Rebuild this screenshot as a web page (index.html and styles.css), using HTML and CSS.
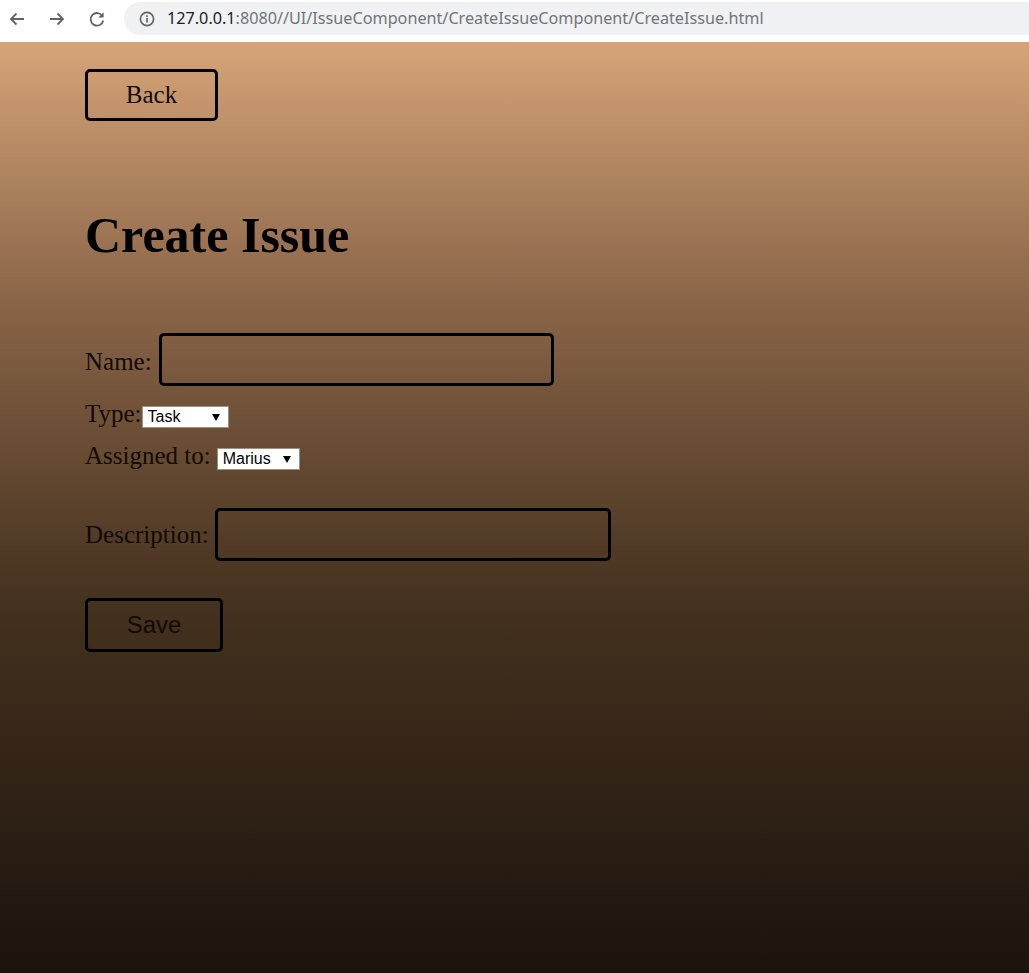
FILE: index.html
```html
<!DOCTYPE html>
<html>
<head>
<meta charset="utf-8">
<title>Create Issue</title>
<link rel="stylesheet" href="styles.css">
</head>
<body>
<div class="chrome">
  <div class="nav-icons">
    <svg class="nav-icon" width="20" height="20" viewBox="0 0 20 20"><path d="M17 10H4M9.5 4.5L4 10l5.5 5.5" fill="none" stroke="#5f6368" stroke-width="1.8"/></svg>
    <svg class="nav-icon" width="20" height="20" viewBox="0 0 20 20"><path d="M3 10h13M10.5 4.5L16 10l-5.5 5.5" fill="none" stroke="#5f6368" stroke-width="1.8"/></svg>
    <svg class="nav-icon" width="20" height="20" viewBox="0 0 20 20"><path d="M15.5 7.2A6.3 6.3 0 1 0 16.2 11.5" fill="none" stroke="#5f6368" stroke-width="1.8"/><path d="M16.6 3.2v5.2h-5.2z" fill="#5f6368"/></svg>
  </div>
  <div class="omnibox">
    <svg class="info" width="16" height="16" viewBox="0 0 16 16"><circle cx="8" cy="8" r="6.6" fill="none" stroke="#5f6368" stroke-width="1.6"/><rect x="7.2" y="7" width="1.6" height="4.6" fill="#5f6368"/><rect x="7.2" y="4.3" width="1.6" height="1.6" fill="#5f6368"/></svg>
    <span class="url"><span class="host">127.0.0.1</span>:8080//UI/IssueComponent/CreateIssueComponent/CreateIssue.html</span>
  </div>
</div>
<main class="page">
  <button class="btn btn-back">Back</button>
  <h1 class="title">Create Issue</h1>
  <div class="row row-name">
    <label class="label">Name:</label>
    <input class="field field-name" type="text">
  </div>
  <div class="row row-type">
    <label class="label">Type:</label>
    <div class="select-wrap select-type">
      <select class="select"><option>Task</option></select>
      <svg class="arrow" width="8" height="7" viewBox="0 0 8 7"><path d="M0 0h8L4 7z" fill="#000"/></svg>
    </div>
  </div>
  <div class="row row-assigned">
    <label class="label">Assigned to:</label>
    <div class="select-wrap select-assigned">
      <select class="select"><option>Marius</option></select>
      <svg class="arrow" width="8" height="7" viewBox="0 0 8 7"><path d="M0 0h8L4 7z" fill="#000"/></svg>
    </div>
  </div>
  <div class="row row-desc">
    <label class="label">Description:</label>
    <input class="field field-desc" type="text">
  </div>
  <button class="btn btn-save">Save</button>
</main>
</body>
</html>
```
FILE: styles.css
```css
html, body {
  margin: 0;
  padding: 0;
}
body {
  width: 1029px;
  height: 973px;
  overflow: hidden;
  font-family: "Liberation Serif", "Times New Roman", serif;
}
.chrome {
  height: 42px;
  background: #ffffff;
  display: flex;
  align-items: flex-start;
  box-sizing: border-box;
}
.nav-icons {
  display: flex;
  gap: 20px;
  padding: 9px 0 0 7px;
  width: 118px;
  box-sizing: border-box;
}
.nav-icon {
  display: block;
}
.omnibox {
  margin-top: 2px;
  margin-left: 6px;
  height: 33px;
  flex: 1;
  background: #eff1f2;
  border-radius: 17px 0 0 17px;
  display: flex;
  align-items: center;
  padding-left: 15px;
}
.info {
  display: block;
  margin-right: 12px;
}
.url {
  font-family: "Noto Sans", "Open Sans", sans-serif;
  font-size: 16.2px;
  color: #70757a;
  letter-spacing: 0;
  position: relative;
  top: -1px;
}
.host {
  color: #202124;
}
.page {
  height: 931px;
  box-sizing: border-box;
  padding: 27px 0 0 85px;
  background: linear-gradient(180deg, #d6a478 0%, #8a6548 27.7%, #45321f 59.9%, #1c130d 100%);
}
.btn {
  display: block;
  box-sizing: border-box;
  background: transparent;
  border: 3px solid #000;
  border-radius: 5px;
  color: #120a05;
  padding: 0;
  margin: 0;
  cursor: pointer;
}
.btn-back {
  width: 133px;
  height: 52px;
  font-family: "Liberation Serif", "Times New Roman", serif;
  font-size: 25px;
}
.title {
  margin: 83px 0 0 0;
  font-size: 50px;
  line-height: 62px;
  font-weight: bold;
  color: #000;
}
.row {
  display: flex;
}
.label {
  font-size: 25px;
  line-height: 28px;
  color: #120a05;
}
.row-name {
  margin-top: 67px;
  align-items: center;
}
.row-name .label {
  padding-top: 4px;
}
.field {
  box-sizing: border-box;
  height: 53px;
  background: transparent;
  border: 3px solid #000;
  border-radius: 5px;
  margin: 0;
  padding: 0 8px;
  font-size: 16px;
}
.field-name {
  width: 395px;
  margin-left: 7px;
}
.field-desc {
  width: 396px;
  margin-left: 6px;
}
.row-type {
  margin-top: 14px;
  align-items: baseline;
}
.row-assigned {
  margin-top: 14px;
  align-items: baseline;
}
.select-wrap {
  position: relative;
  display: inline-block;
}
.select {
  appearance: none;
  -webkit-appearance: none;
  box-sizing: border-box;
  height: 22px;
  background: #fff;
  border: 1px solid #a09080;
  border-radius: 0;
  margin: 0;
  padding: 0 0 0 5px;
  font-family: "Liberation Sans", Arial, sans-serif;
  font-size: 16px;
  color: #000;
}
.select-type .select {
  width: 87px;
}
.select-assigned {
  margin-left: 6px;
}
.select-assigned .select {
  width: 83px;
}
.arrow {
  position: absolute;
  right: 9px;
  top: 8px;
  pointer-events: none;
}
.row-desc {
  margin-top: 38px;
  align-items: center;
}
.btn-save {
  margin-top: 37px;
  width: 138px;
  height: 54px;
  font-family: "Liberation Sans", Arial, sans-serif;
  font-size: 24px;
}
```
